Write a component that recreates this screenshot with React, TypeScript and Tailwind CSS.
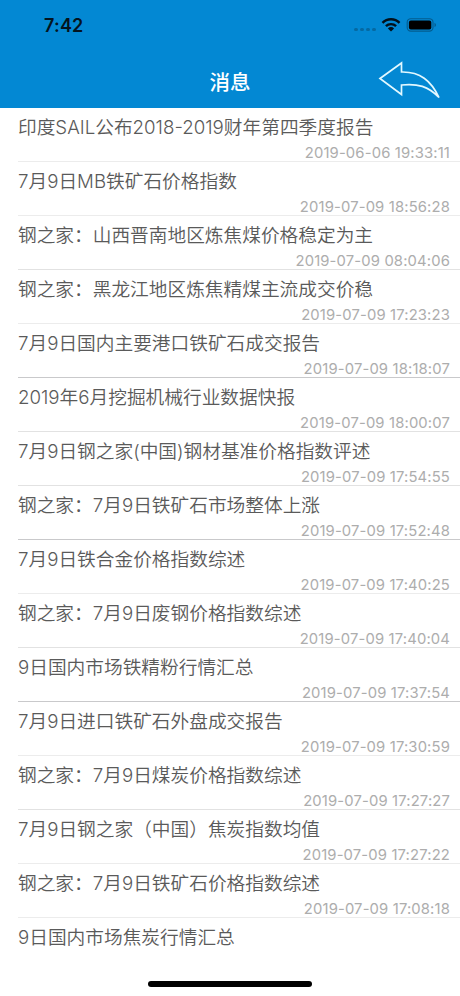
import clsx from 'clsx';

type Message = {
  title: string;
  time?: string;
  divider?: 'light' | 'medium' | 'dark';
};

const MESSAGES: Message[] = [
  { title: '印度SAIL公布2018-2019财年第四季度报告', time: '2019-06-06 19:33:11' },
  { title: '7月9日MB铁矿石价格指数', time: '2019-07-09 18:56:28' },
  { title: '钢之家：山西晋南地区炼焦煤价格稳定为主', time: '2019-07-09 08:04:06', divider: 'medium' },
  { title: '钢之家：黑龙江地区炼焦精煤主流成交价稳', time: '2019-07-09 17:23:23' },
  { title: '7月9日国内主要港口铁矿石成交报告', time: '2019-07-09 18:18:07', divider: 'dark' },
  { title: '2019年6月挖掘机械行业数据快报', time: '2019-07-09 18:00:07', divider: 'medium' },
  { title: '7月9日钢之家(中国)钢材基准价格指数评述', time: '2019-07-09 17:54:55', divider: 'medium' },
  { title: '钢之家：7月9日铁矿石市场整体上涨', time: '2019-07-09 17:52:48', divider: 'dark' },
  { title: '7月9日铁合金价格指数综述', time: '2019-07-09 17:40:25' },
  { title: '钢之家：7月9日废钢价格指数综述', time: '2019-07-09 17:40:04', divider: 'medium' },
  { title: '9日国内市场铁精粉行情汇总', time: '2019-07-09 17:37:54', divider: 'dark' },
  { title: '7月9日进口铁矿石外盘成交报告', time: '2019-07-09 17:30:59' },
  { title: '钢之家：7月9日煤炭价格指数综述', time: '2019-07-09 17:27:27', divider: 'medium' },
  { title: '7月9日钢之家（中国）焦炭指数均值', time: '2019-07-09 17:27:22' },
  { title: '钢之家：7月9日铁矿石价格指数综述', time: '2019-07-09 17:08:18' },
  { title: '9日国内市场焦炭行情汇总' }
];

export default function App() {
  return (
    <div className="flex flex-col w-[460px] h-[996px] overflow-hidden bg-white font-[Inter,'Noto_Sans_CJK_SC',sans-serif]">
      <header className="h-[108px] shrink-0 bg-[#0388d3]">
        <StatusBar />
        <NavBar />
      </header>
      <main className="flex-1">
        <ul>
          {MESSAGES.map(message => (
            <MessageRow key={message.title} message={message} />
          ))}
        </ul>
      </main>
      <div className="h-5 shrink-0 flex justify-center items-start pt-[5px]">
        <div className="w-[164px] h-[6px] rounded-full bg-black" />
      </div>
    </div>
  );
}

const StatusBar = () => (
  <div className="h-[50px] flex justify-between pl-[44px] pr-[23px]">
    <span className="pt-[12px] text-[18px] leading-7 font-semibold tracking-[0.2px] text-[#041420]">
      7:42
    </span>
    <div className="flex items-start pt-[17px]">
      <div className="flex gap-[2px] mt-[11px] mr-[5px]">
        {[0, 1, 2, 3].map(dot => (
          <span key={dot} className="w-[4px] h-[3px] rounded-full bg-[#0569a2]" />
        ))}
      </div>
      <svg width="20" height="15" viewBox="0 0 20 15" fill="none" className="mr-[5px]">
        <path d="M1.5 5.8a12 12 0 0 1 17 0" stroke="#03101a" strokeWidth="2.5" />
        <path d="M4.9 9.2a7.2 7.2 0 0 1 10.2 0" stroke="#03101a" strokeWidth="2.4" />
        <path d="M10 14.4 6.9 11.4a4.4 4.4 0 0 1 6.2 0Z" fill="#03101a" />
      </svg>
      <svg width="31" height="15" viewBox="0 0 31 15" fill="none">
        <rect x="1.2" y="1.7" width="25.8" height="12.4" rx="3.6" stroke="#045c8f" strokeWidth="1.1" />
        <rect x="2.9" y="3.4" width="22.4" height="9" rx="2" fill="#000" />
        <path d="M28.5 5.7c2 .8 2 3.6 0 4.4Z" fill="#045c8f" />
      </svg>
    </div>
  </div>
);

const NavBar = () => (
  <div className="h-[58px] grid grid-cols-[1fr_auto_1fr] items-start">
    <h1 className="col-start-2 pt-[17px] text-[20.5px] leading-8 font-medium text-white">
      消息
    </h1>
    <button type="button" aria-label="返回" className="justify-self-end mt-[10px] mr-[18px]">
      <svg width="64" height="42" viewBox="0 0 64 42" fill="none">
        <path
          d="M2 18.5 23.5 3v9C42 11.5 53 20.5 61 37.5 50 26 40 23.5 23.5 25v9.5Z"
          stroke="#e2f8ff"
          strokeWidth="1.7"
        />
      </svg>
    </button>
  </div>
);

const MessageRow = ({ message }: { message: Message }) => {
  const { title, time, divider = 'light' } = message;
  return (
    <li className="h-[54px] pl-[18px]">
      <div
        className={clsx(
          'h-full flex flex-col',
          time && 'border-b',
          divider === 'light' && 'border-[#ececec]',
          divider === 'medium' && 'border-[#e2e2e2]',
          divider === 'dark' && 'border-[#c9c9cb]'
        )}
      >
        <h2 className="pt-[6px] text-[18.7px] leading-7 font-[350] text-[#5a5a5a] whitespace-nowrap">
          {title}
        </h2>
        {time && (
          <time className="self-end mr-[10px] text-[14.8px] leading-[22px] tracking-[0.15px] text-[#adadad]">
            {time}
          </time>
        )}
      </div>
    </li>
  );
};
